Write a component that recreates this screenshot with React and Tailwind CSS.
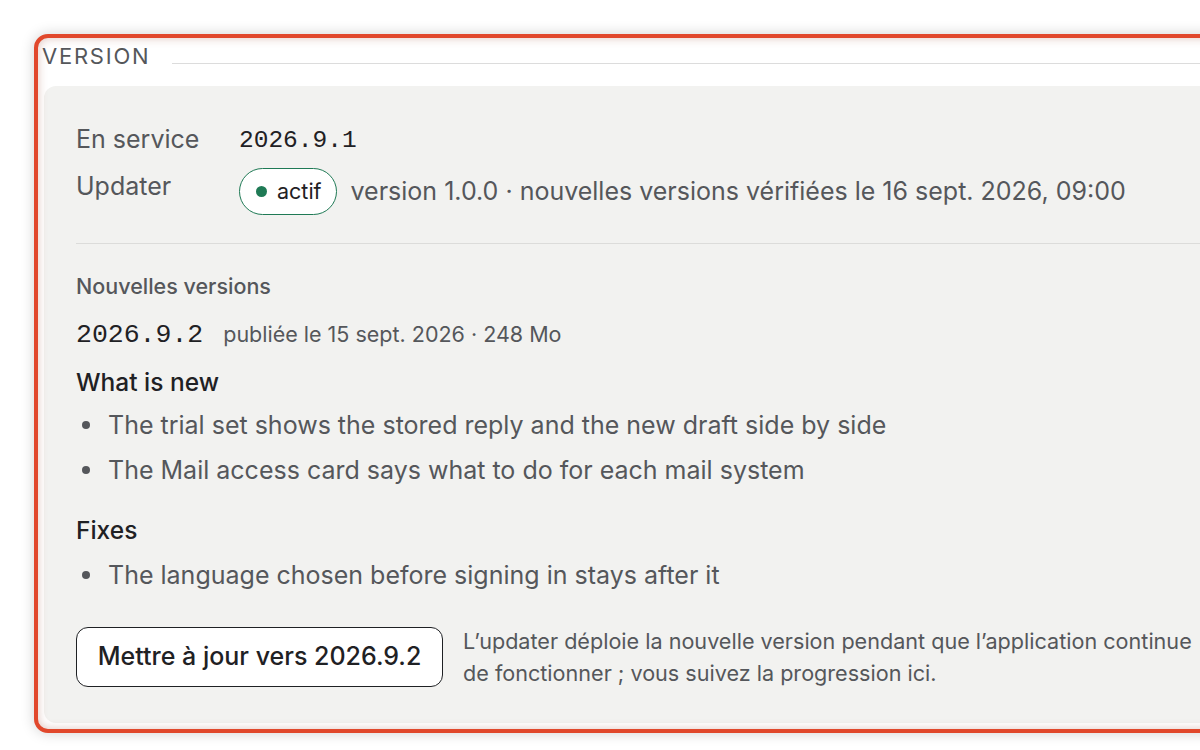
export default function App() {
  const gray = 'text-[#55575b]';

  return (
    <div className="h-[750px] w-[1200px] overflow-hidden bg-white pl-[34px] pt-[34px] font-['Inter',sans-serif]">
      <div className="relative w-[1220px] rounded-[14px] border-4 border-[#e1482c] bg-white pb-[6px] shadow-[0_0_14px_rgba(0,0,0,0.18)]">
        {/* legend */}
        <div className="flex items-end pl-1 pt-[4px]">
          <span className={`text-[22px] leading-[28px] tracking-[0.08em] ${gray}`}>VERSION</span>
          <div className="mb-[6px] ml-[22px] h-px flex-1 bg-[#dcdcdc]" />
        </div>

        {/* panel */}
        <div className="ml-[6px] mt-[16px] rounded-[12px] bg-[#f2f2f0] pb-[34px] pl-[32px] pt-[37px]">
          <div className="grid grid-cols-[163px_1fr] items-start gap-y-[11px]">
            <div className={`text-[25px] leading-[32px] ${gray}`}>En service</div>
            <div className="pt-[2px] font-['Liberation_Mono',monospace] text-[24.5px] leading-[32px] text-[#1f2124]">2026.9.1</div>

            <div className={`pt-[2px] text-[25px] leading-[32px] ${gray}`}>Updater</div>
            <div className="flex items-center gap-[14px]">
              <span className="flex h-[47px] items-center gap-[10px] rounded-full border-[1.5px] border-[#1f7a55] bg-white pl-[16px] pr-[14px]">
                <span className="h-[11px] w-[11px] rounded-full bg-[#1f7a55]" />
                <span className="text-[21.5px] text-[#1f2124]">actif</span>
              </span>
              <span className={`text-[25px] ${gray}`}>
                version 1.0.0 · nouvelles versions vérifiées le 16 sept. 2026, 09:00
              </span>
            </div>
          </div>

          <div className="mt-[28px] h-px bg-[#dcdcda]" />

          <div className={`mt-[28px] text-[21.5px] font-medium leading-[28px] ${gray}`}>Nouvelles versions</div>

          <div className="mt-[18px] flex items-baseline gap-[20px]">
            <span className="font-['Liberation_Mono',monospace] text-[26.5px] leading-[32px] text-[#1f2124]">2026.9.2</span>
            <span className={`text-[21.5px] ${gray}`}>publiée le 15 sept. 2026 · 248 Mo</span>
          </div>

          <div className="mt-[15px] text-[24.5px] font-medium leading-[32px] text-[#1f2124]">What is new</div>
          <ul className="mt-[11px] flex flex-col gap-[13px]">
            <Bullet>The trial set shows the stored reply and the new draft side by side</Bullet>
            <Bullet>The Mail access card says what to do for each mail system</Bullet>
          </ul>

          <div className="mt-[28px] text-[24.5px] font-medium leading-[32px] text-[#1f2124]">Fixes</div>
          <ul className="mt-[13px] flex flex-col gap-[13px]">
            <Bullet>The language chosen before signing in stays after it</Bullet>
          </ul>

          <div className="mt-[34px] flex items-center gap-[20px]">
            <button className="h-[60px] w-[367px] rounded-[12px] border-[1.5px] border-[#1f2124] bg-white text-[25px] font-medium text-[#1f2124]">
              Mettre à jour vers 2026.9.2
            </button>
            <p className={`text-[21.6px] leading-[32px] ${gray}`}>
              L’updater déploie la nouvelle version pendant que l’application continue
              <br />
              de fonctionner ; vous suivez la progression ici.
            </p>
          </div>
        </div>

        <div className="pointer-events-none absolute inset-0 rounded-[10px] shadow-[inset_0_0_10px_rgba(150,60,40,0.3)]" />
      </div>
    </div>
  );
}

function Bullet({ children }) {
  return (
    <li className="flex items-center text-[25px] leading-[32px] text-[#55575b]">
      <span className="ml-[6px] mr-[18px] h-[8px] w-[8px] rounded-full bg-[#55575b]" />
      {children}
    </li>
  );
}
